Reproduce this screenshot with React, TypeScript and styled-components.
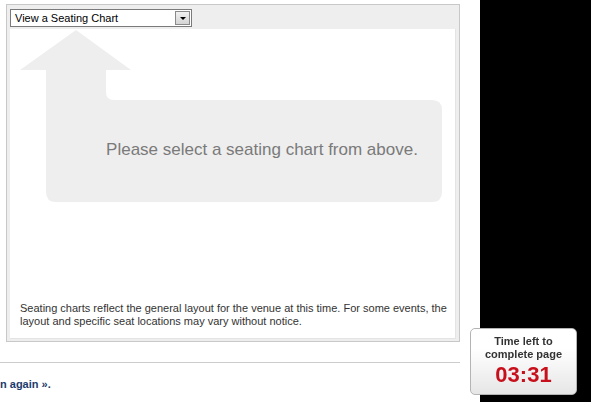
import React from 'react';
import styled, { createGlobalStyle } from 'styled-components';

const GlobalStyle = createGlobalStyle`
  html, body {
    margin: 0;
    padding: 0;
    background: #fff;
  }
  body {
    font-family: Arial, "Liberation Sans", sans-serif;
    font-size: 11px;
    color: #333;
    overflow: hidden;
  }
`;

const Page = styled.div`
  display: flex;
  width: 591px;
  height: 402px;
`;

const Main = styled.div`
  width: 480px;
  background: #fff;
  padding-top: 4px;
  box-sizing: border-box;
`;

const Side = styled.div`
  flex: 1;
  background: #000;
`;

const Panel = styled.div`
  margin-left: 6px;
  width: 454px;
  height: 338px;
  box-sizing: border-box;
  border: 1px solid #c8c8c8;
  background: #eee;
  padding: 0 3px 2px 3px;
  display: flex;
  flex-direction: column;
`;

const PanelHeader = styled.div`
  height: 24px;
  display: flex;
  align-items: center;
  padding-top: 1px;
  box-sizing: border-box;
`;

const Select = styled.div`
  width: 182px;
  height: 18px;
  box-sizing: border-box;
  border: 1px solid #7a7a7a;
  background: #fff;
  display: flex;
  align-items: center;
  justify-content: space-between;
  padding-left: 4px;
  font-size: 11px;
  color: #000;
`;

const SelectButton = styled.div`
  width: 15px;
  height: 14px;
  margin-right: 1px;
  box-sizing: border-box;
  border: 1px solid #8a8a8a;
  background: linear-gradient(#f2f2f2, #d4d4d4);
  display: flex;
  align-items: center;
  justify-content: center;

  &::after {
    content: '';
    border-left: 3px solid transparent;
    border-right: 3px solid transparent;
    border-top: 3px solid #000;
    margin-top: 1px;
  }
`;

const Body = styled.div`
  flex: 1;
  background: #fff;
  border-right: 1px solid #e4e4e4;
  border-bottom: 1px solid #e4e4e4;
  display: flex;
  flex-direction: column;
  justify-content: space-between;
`;

const Illustration = styled.div`
  position: relative;
  height: 178px;
`;

const Arrow = styled.svg`
  position: absolute;
  inset: 0;
`;

const Message = styled.div`
  position: absolute;
  left: 52px;
  width: 400px;
  top: 111px;
  text-align: center;
  font-size: 17px;
  color: #7a7a7a;
`;

const Note = styled.p`
  margin: 0;
  padding: 0 0 10px 10px;
  font-size: 11px;
  line-height: 13px;
  color: #333;
`;

const Divider = styled.hr`
  margin: 20px 0 0 0;
  width: 460px;
  border: 0;
  border-top: 1px solid #ccc;
`;

const Again = styled.div`
  margin-top: 15px;
  font-size: 11px;
  font-weight: bold;
  color: #1c3b6c;
`;

const Timer = styled.div`
  position: fixed;
  left: 470px;
  top: 328px;
  width: 107px;
  height: 67px;
  box-sizing: border-box;
  border: 1px solid #b4b4b4;
  border-radius: 5px;
  background: linear-gradient(#fff 30%, #e6e6e6);
  text-align: center;
  padding-top: 6px;
`;

const TimerLabel = styled.div`
  font-size: 11px;
  font-weight: bold;
  line-height: 13px;
  color: #333;
`;

const TimerValue = styled.div`
  font-size: 22px;
  font-weight: bold;
  line-height: 24px;
  margin-top: 2px;
  color: #c8101c;
`;

export default function App() {
  return (
    <>
      <GlobalStyle />
      <Page>
        <Main>
          <Panel>
            <PanelHeader>
              <Select>
                View a Seating Chart
                <SelectButton />
              </Select>
            </PanelHeader>
            <Body>
              <Illustration>
                <Arrow width="446" height="178" viewBox="0 0 446 178">
                  <path
                    fill="#eee"
                    d="M66 1 L121 41 L96 41 L96 63 Q96 71 104 71 L422 71 Q432 71 432 81 L432 163 Q432 173 422 173 L46 173 Q36 173 36 163 L36 41 L10 41 Z"
                  />
                </Arrow>
                <Message>Please select a seating chart from above.</Message>
              </Illustration>
              <Note>
                Seating charts reflect the general layout for the venue at this time. For some events, the
                layout and specific seat locations may vary without notice.
              </Note>
            </Body>
          </Panel>
          <Divider />
          <Again>n again ».</Again>
        </Main>
        <Side />
      </Page>
      <Timer>
        <TimerLabel>Time left to</TimerLabel>
        <TimerLabel>complete page</TimerLabel>
        <TimerValue>03:31</TimerValue>
      </Timer>
    </>
  );
}
